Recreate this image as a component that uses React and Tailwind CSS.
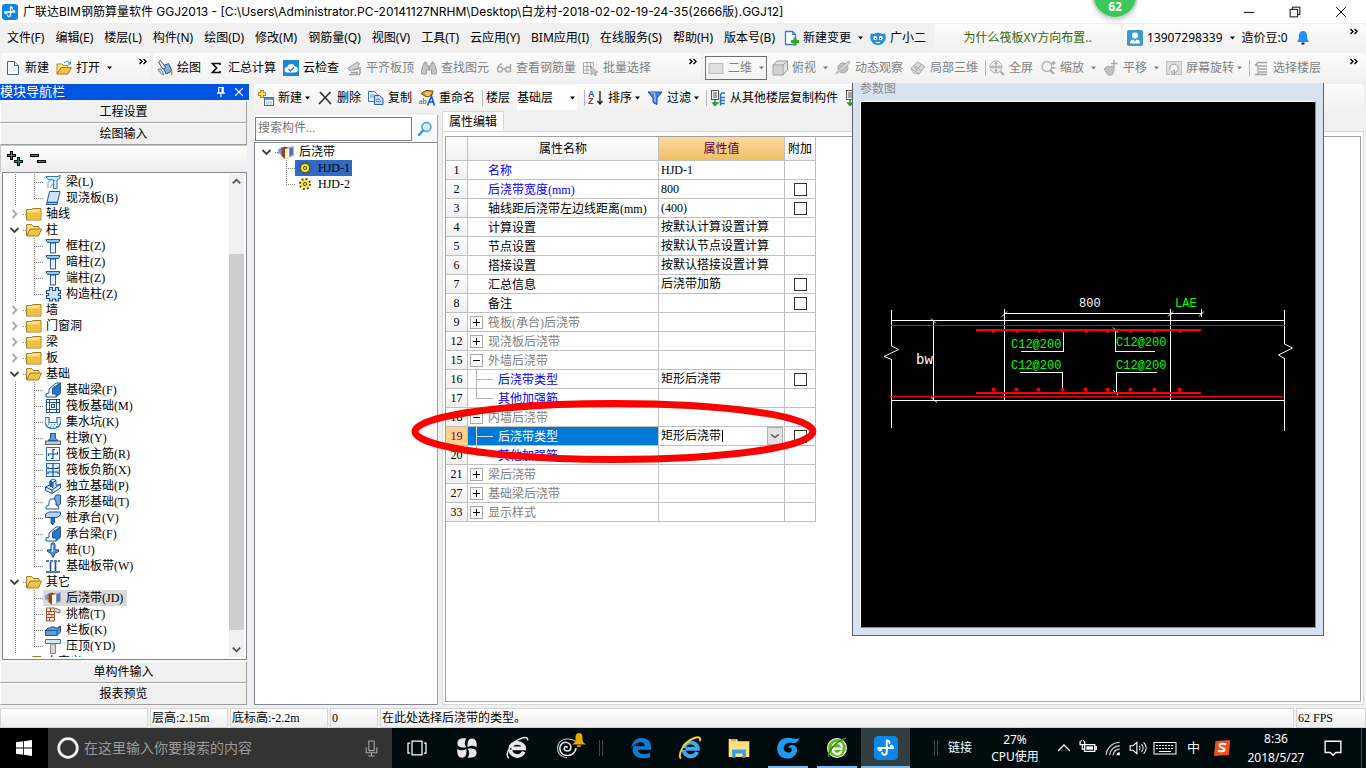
import React from 'react';
import clsx from 'clsx';

const UI_FONT = "font-['Noto_Sans','Noto_Sans_CJK_SC',sans-serif]";
const TITLE_FONT = "font-['Inter','Noto_Sans_CJK_SC',sans-serif]";
const SONG_FONT = "font-['Liberation_Serif','Noto_Sans_CJK_SC',serif]";

// ===== ICONS =====

const Ico = ({ children, className = 'h-4 w-4' }) => (
    <svg className={clsx('shrink-0', className)} viewBox="0 0 16 16" fill="none" aria-hidden="true">
        {children}
    </svg>
);

const LogoMark = ({ className }) => (
    <Ico className={className}>
        <rect width="16" height="16" rx="3" fill="#0b86ea" />
        <path d="M8.500 3v7.500c0 2.600-3 2.600-3 .6M2.800 8h10M2.800 8c0 1.800 1.600 2 2 1M8.500 3c1.500 0 2 .8 1.800 1.800M12.800 8c0-1.200-.8-1.600-1.600-1.400" stroke="#fff" strokeWidth="1.300" strokeLinecap="round" />
    </Ico>
);

const icons = {
    doc: (
        <Ico>
            <path d="M2.500 1.500h7l4 4v9h-11z" fill="#f6fbff" stroke="#41678f" />
            <path d="M9.500 1.500v4h4" fill="#cfe2f7" stroke="#41678f" />
        </Ico>
    ),
    open: (
        <Ico>
            <path d="M1 14V4h5l1.500 1.500H12V8H5z" fill="#ffe9a0" stroke="#b98a1e" />
            <path d="M1 14l4-6.500h10.500L12 14z" fill="#f6c445" stroke="#b07d14" />
            <path d="M8 3c2-2.500 5-2 5.500.5M14.500 1.500v2.500h-2.500" stroke="#3a7bd5" />
        </Ico>
    ),
    draw: (
        <Ico>
            <path d="M5.500 6l6-2.500 3.500 7.500-6 3z" fill="#7db4e8" stroke="#1f4f8f" />
            <path d="M1.500 2l2-1.500 5 6.500-1.500 2-2-1z" fill="#e9eef5" stroke="#3c4d66" />
            <path d="M1 9c1 3 3 5 6 6l-3-6z" fill="#b9d4ee" stroke="#4a6d97" strokeWidth=".8" />
            <path d="M12 10c2 0 3.500 2 2.500 5" stroke="#c28b1c" strokeWidth="1.500" />
        </Ico>
    ),
    sigma: (
        <Ico>
            <path d="M12 5V3.500H4.500L8.500 8l-4 4.500H12V11" stroke="#111" strokeWidth="1.700" />
        </Ico>
    ),
    cloud: (
        <Ico>
            <rect width="16" height="16" fill="#1b87cf" />
            <path d="M4.500 12.500a2.800 2.800 0 01-.3-5.600 4 4 0 017.600-.5 3 3 0 01.2 6z" fill="#fff" />
            <path d="M5.500 9l2 2 3.500-4" stroke="#1b87cf" strokeWidth="1.300" />
        </Ico>
    ),
    slab: (
        <Ico>
            <path d="M1.500 8.500l10-6.500 2 1.500-2 5-7.500 2z" fill="#d2d2d2" stroke="#9c9c9c" />
            <path d="M3 14.500h11M5 12.500h7M7 10l7-2v6" stroke="#a0a0a0" strokeWidth="1.500" />
        </Ico>
    ),
    binoculars: (
        <Ico>
            <path d="M3 3h3v3h4V3h3l2.500 7v4h-5v-4h-5v4h-5v-4z" fill="#c4c4c4" stroke="#a2a2a2" />
            <path d="M4.500 3V1.500M11.500 3V1.500M8 6v4" stroke="#9c9c9c" strokeWidth="1.500" />
        </Ico>
    ),
    glasses: (
        <Ico>
            <path d="M6 4C3 4 1.500 7 1.500 9.500a2.500 2.500 0 105 0 2.500 2.500 0 00-5 0M14.500 4v8M14.500 9.500a2.500 2.500 0 10-5 0 2.500 2.500 0 005 0M6.500 9h3" stroke="#a4a4a4" strokeWidth="1.300" />
        </Ico>
    ),
    batch: (
        <Ico>
            <path d="M.5 2.500h10v4M.5 2.500v11h6M.5 6.500h9M.5 10h6M4 2.500v11M7.500 2.500v6" stroke="#a8a8a8" />
            <path d="M8 7l7 5-3 .5 1.500 2.500-1.500.5-1.500-2.500L8 15z" fill="#c9c9c9" stroke="#9b9b9b" strokeWidth=".8" />
        </Ico>
    ),
    plane2d: (
        <Ico>
            <rect x="1" y="3.500" width="14" height="10" fill="#dedede" stroke="#bdbdbd" />
        </Ico>
    ),
    cube: (
        <Ico>
            <path d="M1 5l4-4h10.500v9L11 15H1z" fill="#e2e2e2" stroke="#9a9a9a" />
            <path d="M1 5h10v10M11 5l4.500-4" stroke="#9a9a9a" />
            <path d="M2 6h8v8H2z" fill="#d0d0d0" />
        </Ico>
    ),
    planet: (
        <Ico>
            <circle cx="8" cy="8" r="5" fill="#c2c2c2" stroke="#a8a8a8" />
            <path d="M4 12c-3 2.500-3.500 2-2.500.5C4 9 9.500 4 13 2c2.500-1.500 2.500-.5 1 1.500C12 6 8 9.500 4 12z" fill="#dcdcdc" stroke="#a0a0a0" strokeWidth=".8" />
        </Ico>
    ),
    local3d: (
        <Ico>
            <path d="M1 8.500L7.500 2l7.500 4.500L9 14z" fill="#d8d8d8" stroke="#a9a9a9" />
            <path d="M4 5.500l7.500 5M6 10.500L12 4M1 8.500L3.500 13 9 14M5 7l2 4" stroke="#a9a9a9" />
        </Ico>
    ),
    full: (
        <Ico>
            <circle cx="7" cy="7" r="6" fill="#efefef" stroke="#aaa" />
            <path d="M7 2.500v9M2.500 7h9M5.500 4L7 2.500 8.500 4M5.500 10L7 11.500 8.500 10M4 5.500L2.500 7 4 8.500M10 5.500L11.500 7 10 8.500" stroke="#999" />
            <path d="M11.500 11.500L15 15" stroke="#a5a5a5" strokeWidth="2" />
        </Ico>
    ),
    zoom: (
        <Ico>
            <circle cx="7" cy="6.500" r="5" fill="#f3f3f3" stroke="#b5b5b5" strokeWidth="1.500" />
            <path d="M10.500 10.500L14 14" stroke="#a5a5a5" strokeWidth="2" />
            <path d="M13.500 1v4M11.500 3h4M11.500 8h4" stroke="#a5a5a5" strokeWidth="1.300" />
        </Ico>
    ),
    pan: (
        <Ico>
            <path d="M3 7l2-1 2 1 2-1 2 1v4l-2 4H5L1 9z" fill="#c0c0c0" stroke="#a8a8a8" />
            <path d="M11 0v7M8 3.500h6.500" stroke="#a5a5a5" strokeWidth="1.300" />
        </Ico>
    ),
    rotate: (
        <Ico>
            <rect x=".5" y="1.500" width="15" height="13" fill="#dedede" stroke="#c2c2c2" />
            <path d="M4 9.500A4.200 4.200 0 118.500 12.500M8.500 10v4.500L5.500 12z" fill="#f4f4f4" stroke="#a0a0a0" />
        </Ico>
    ),
    floors: (
        <Ico>
            <path d="M2 5.500l3-3h9M6 6h8M6 9h8M6 12h8M2 14.500h12M2 5.500h3v9" stroke="#a5a5a5" strokeWidth="1.300" />
        </Ico>
    ),
    change: (
        <Ico>
            <path d="M2.500 1.500h7l3 3v10h-10z" fill="#fff" stroke="#2d7dd2" strokeWidth="1.300" />
            <path d="M9.500 1.500v3h3" stroke="#2d7dd2" />
            <path d="M12 7.500v8M8 11.500h8" stroke="#37a821" strokeWidth="3" />
        </Ico>
    ),
    robot: (
        <Ico>
            <path d="M1 3.500l3 .5a8 8 0 018 0l3-.5c1 2 1 5 0 7C13.500 13.500 11 15 8 15s-5.500-1.500-7-4.500c-1-2-1-5 0-7z" fill="#1f8fe0" />
            <ellipse cx="5.200" cy="8" rx="2" ry="2.300" fill="#fff" />
            <ellipse cx="10.800" cy="8" rx="2" ry="2.300" fill="#fff" />
            <path d="M5.500 8v1M10.500 8v1" stroke="#123" />
            <path d="M6 12.200c1.200.8 2.800.8 4 0" stroke="#fff" />
        </Ico>
    ),
    user: (
        <Ico>
            <rect width="16" height="16" rx="2" fill="#3f97cf" />
            <circle cx="8" cy="5.500" r="3" fill="#fff" />
            <path d="M3 13.500c0-4 2.500-4 5-4s5 0 5 4z" fill="#fff" />
            <path d="M6 9l2 2.500L10 9" fill="#3f97cf" />
        </Ico>
    ),
    bell: (
        <Ico>
            <path d="M8 1c-3.500 0-4 3-4 5.500S3 10 2 12h12c-1-2-2-3-2-5.500S11.500 1 8 1z" fill="#1e90ff" />
            <path d="M6.500 13.500h3" stroke="#222" strokeWidth="2" />
        </Ico>
    ),
    add: (
        <Ico>
            <path d="M4 0v8M0 4h8" stroke="#a07a00" strokeWidth="3.500" />
            <path d="M4 1v6M1 4h6" stroke="#ffe14d" strokeWidth="1.800" />
            <rect x="6.500" y="7.500" width="9" height="8" fill="#fff" stroke="#3a6ea5" />
            <path d="M7 9h8" stroke="#5b9be0" strokeWidth="2" />
            <path d="M8 12h6M8 14h6" stroke="#8bb3dd" />
        </Ico>
    ),
    del: (
        <Ico>
            <path d="M3 2l11 12M13.500 2L2 14" stroke="#333" strokeWidth="1.700" />
        </Ico>
    ),
    copy: (
        <Ico>
            <path d="M.5 1.500h6l3 3v7h-9z" fill="#e6f1ff" stroke="#3573c4" />
            <path d="M6.500 5.500h5l3.500 3v6H6.500z" fill="#bcd8fb" stroke="#2a62b0" />
            <path d="M2 5h4M2 7h4M8 9.500h4M8 11.500h5" stroke="#5f94d8" />
        </Ico>
    ),
    rename: (
        <Ico>
            <path d="M2 3.500l5-3 7 .5-1 4-5 2-3-1.500z" fill="#d79a2b" stroke="#705012" />
            <path d="M6 3h5M7 5h4" stroke="#fff0b8" />
            <text x="0" y="14" fontSize="8" fontFamily="Liberation Serif" fill="#444">ab</text>
            <path d="M8.500 15.500L12.500 6l3 9.500M10 12h4.500" stroke="#1556c9" strokeWidth="1.600" />
        </Ico>
    ),
    sort: (
        <Ico>
            <text x="0" y="7" fontSize="9" fontWeight="bold" fontFamily="Liberation Sans" fill="#2a4fa8">A</text>
            <text x="0" y="14" fontSize="9" fontWeight="bold" fontFamily="Liberation Sans" fill="#a03030">Z</text>
            <path d="M12 1v12M9.500 11l2.500 3 2.500-3" stroke="#222" strokeWidth="1.400" />
        </Ico>
    ),
    filter: (
        <Ico>
            <path d="M1 2h14L10 8v6.500l-4-2V8z" fill="#3d83e6" stroke="#1d4ea3" />
            <path d="M3.500 3h4L8 8v4" stroke="#a8cbff" strokeWidth="1.200" />
        </Ico>
    ),
    copyFloor: (
        <Ico>
            <rect x="1.500" y=".5" width="7" height="9" fill="#f3f3f3" stroke="#555" />
            <path d="M3 3h4M3 5h4M3 7h4" stroke="#555" />
            <path d="M5 10v3M3 13l2 2.500L7.500 13z" stroke="#1f9d2f" strokeWidth="1.600" />
            <path d="M15 3h-3l-1.500 1.500v11M11 7.500h4M11 10.500h4M11 13.500h4" stroke="#2a6bc9" strokeWidth="1.500" />
        </Ico>
    ),
    search: (
        <Ico>
            <circle cx="9.500" cy="6" r="4.500" fill="#dff0ff" stroke="#5aaeea" strokeWidth="1.800" />
            <path d="M6 9.500L2 14" stroke="#3f94d8" strokeWidth="2.500" strokeLinecap="round" />
        </Ico>
    ),
    // component types in the module tree
    beam: (
        <Ico>
            <path d="M1 2.500h12l2-1.500v3l-3 2v8.500H8.500V6L3 5.500z" fill="#d6ecfc" stroke="#2a78c2" />
            <path d="M3 14V8l4-3M5 14l5-8" stroke="#5aa5df" />
        </Ico>
    ),
    castSlab: (
        <Ico>
            <path d="M4.500 1.500h10.500L12 14.500H1.500z" fill="#cfe4fb" stroke="#2257a8" />
            <path d="M2 12.500h10.500" stroke="#2257a8" strokeWidth="1.500" />
        </Ico>
    ),
    column: (
        <Ico>
            <path d="M1 1.500h14l-1.500 3h-11z" fill="#9cc4f3" stroke="#1f5fae" />
            <path d="M5.500 5h5v10h-5z" fill="#e6f1ff" stroke="#1f5fae" />
        </Ico>
    ),
    gearCol: (
        <Ico>
            <path d="M4.500 1.500h3v3h3v-3h3v3h2v3h-2v2h2v3h-2v2.500h-3v-2h-3v2h-3v-2.500h-3v-3h2v-2h-2v-3h3z" fill="#cfe1f6" stroke="#1d4f94" strokeWidth="1.200" />
        </Ico>
    ),
    fBeam: (
        <Ico>
            <path d="M1 15v-3l3-1V7l7-6h4.500v10L11 15z" fill="#eef6ff" stroke="#1b559e" />
            <path d="M7.500 12V6l8-5v10L11 15v-3z" fill="#2c76bd" stroke="#1b559e" />
        </Ico>
    ),
    raft: (
        <Ico>
            <rect x="1.500" y="1.500" width="13" height="13" fill="#fff" stroke="#184f9b" />
            <path d="M4.500 1v14M11.500 1v14M1 4.500h14M1 11.500h14" stroke="#184f9b" />
            <rect x="6.500" y="6.500" width="3" height="3" stroke="#184f9b" />
        </Ico>
    ),
    pit: (
        <Ico>
            <path d="M0 3.500h4v5h8v-5h4v4c-1 5-4 7-8 7s-7-2-8-6z" fill="#e7f2fd" stroke="#2d6fb7" strokeWidth="1.200" />
            <path d="M3 10h1M6 11h1M9 10.500h1M12 10h1M5 13h1M8 13h1M11 12.500h1" stroke="#2d6fb7" />
        </Ico>
    ),
    pier: (
        <Ico>
            <rect x=".5" y="11" width="15" height="3.500" fill="#c9c9c9" stroke="#666" />
            <path d="M3 10.500l2.500-2V3.500h5v5l2.500 2z" fill="#5c9be0" stroke="#1f559e" />
        </Ico>
    ),
    mainBar: (
        <Ico>
            <rect x="1.500" y="1.500" width="13" height="13" fill="#f3f9ff" stroke="#2a69bd" />
            <path d="M10 3.500H8v9H6M3.500 10V8h9V6" stroke="#184f9b" strokeWidth="1.200" />
        </Ico>
    ),
    negBar: (
        <Ico>
            <rect x="1.500" y="1.500" width="13" height="13" fill="#dbeafb" stroke="#2a69bd" />
            <path d="M8 1v14M3 5v1.500h10V5M3 12v-2h10v2" stroke="#184f9b" strokeWidth="1.200" />
        </Ico>
    ),
    isolated: (
        <Ico>
            <path d="M.5 9L5 7V3l3-2 3 1.500v5L15.500 6v4L7 15.500l-6.500-3z" fill="#d9eafa" stroke="#184f9b" />
            <path d="M5 3l3 1.500v5L5 8zM8 4.500l3-2" fill="#2f73c0" stroke="#184f9b" />
            <path d="M.5 9L7 12l8.500-6M7 12v3" stroke="#184f9b" />
        </Ico>
    ),
    strip: (
        <Ico>
            <path d="M9 5l2-4h4.500v9L12 12z" fill="#6fa8de" stroke="#1b559e" />
            <path d="M1 15v-2.500L4 11V8l1.500-3h4L11 8v3l2.500 1.500V15z" fill="#fff" stroke="#1b559e" />
        </Ico>
    ),
    cap: (
        <Ico>
            <path d="M.5 4L4 2h11.500v3L12 7.500H.5z" fill="#b4d5f5" stroke="#1b559e" />
            <path d="M6 8h3.500v4.500L7.700 15 6 12.500z" fill="#2f73c0" stroke="#1b559e" />
        </Ico>
    ),
    pile: (
        <Ico>
            <path d="M8 .8a2 2 0 012 2v5h3.500v1.700L10 11.500 8 15.500l-2-4-3.500-2V7.800H6v-5a2 2 0 012-2z" fill="#4f8fcf" stroke="#1b4f94" />
            <path d="M7.500 3v7" stroke="#d4e8fb" strokeWidth="1.500" />
        </Ico>
    ),
    stripSlab: (
        <Ico>
            <path d="M1 3h14" stroke="#184f9b" strokeWidth="1.600" strokeDasharray="3 1" />
            <path d="M1 14h14M5.500 4v9M10.500 4v9" stroke="#184f9b" strokeWidth="1.600" />
        </Ico>
    ),
    pourBand: (
        <Ico>
            <path d="M0 6l4-3v8l-4-2zM9 4l6.500-1.500v9L9 14z" fill="#7a94c8" stroke="#a3b2cf" />
            <path d="M3.500 4L7 2.500 11 4v10l-4 1-3.500-3z" fill="#8b4a1c" />
            <path d="M7 5l4-1v10l-4 1z" fill="#fff0dc" />
            <path d="M12 4h3v7h-3z" fill="#4f72b8" />
        </Ico>
    ),
    eaves: (
        <Ico>
            <path d="M1.500 2h8v13h-8z" fill="#fdf0e8" stroke="#a74f22" />
            <path d="M1.500 5.500h8M1.500 8.500h8M1.500 11.500h8M5.500 2v3.500M4 5.500v3M7 8.500v3M4.500 12v3" stroke="#a74f22" />
            <path d="M9.500 2L15 4v3L9.500 5.500" fill="#e2e2e2" stroke="#777" />
        </Ico>
    ),
    railing: (
        <Ico>
            <path d="M.5 8.500L3 6h2l1-1h4v1h2l3.500-2v6L12 13.500H.5z" fill="#5a9fd8" stroke="#1c5591" />
            <path d="M.5 8.500H12v5M12 8.500L15.500 4" stroke="#1c5591" />
        </Ico>
    ),
    coping: (
        <Ico>
            <path d="M.5 1.500h15v4H.5z" fill="#d2e8fb" stroke="#2879c9" />
            <path d="M5.500 6h5v9.500h-5z" fill="#d6d6d6" stroke="#8a8a8a" />
        </Ico>
    ),
    folder: (
        <Ico>
            <path d="M.5 3.500h5l1.500-1h8v11.500H.5z" fill="#f7d26a" stroke="#a77f22" />
            <path d="M1 6.500h13.500v7H1z" fill="#f1bf44" />
            <path d="M1.500 5h12" stroke="#fff2bf" />
        </Ico>
    ),
    folderOpen: (
        <Ico>
            <path d="M.5 13.500v-11h5L7 4.500h6v3H4z" fill="#fbe08c" stroke="#a77f22" />
            <path d="M.8 14L4 7h11.500l-3 7z" fill="#f3c24a" stroke="#a77f22" />
        </Ico>
    ),
    gear: (
        <Ico>
            <circle cx="8" cy="8" r="5" stroke="#5b4b00" strokeWidth="2" strokeDasharray="2 1.900" />
            <circle cx="8" cy="8" r="4" fill="#ffe600" />
            <circle cx="8" cy="8" r="1.500" fill="#fff" stroke="#333" />
        </Ico>
    ),
};

const Caret = () => (
    <svg className="h-1 w-[5px] shrink-0" viewBox="0 0 5 4" aria-hidden="true">
        <path d="M0 .5h5L2.500 3.500z" fill="currentColor" />
    </svg>
);

const More = () => (
    <svg className="h-2 w-2 shrink-0" viewBox="0 0 8 8" fill="none" aria-hidden="true">
        <path d="M.5 1L3 3.500.5 6M4.500 1L7 3.500 4.500 6" stroke="#000" strokeWidth="1.400" />
    </svg>
);

// ===== TOOLBARS =====

const Tool = ({ icon, label, arrow, tight, disabled, className }) => (
    <button
        type="button"
        className={clsx('flex shrink-0 items-center whitespace-nowrap leading-4', disabled ? 'text-[#808080]' : 'text-black', className)}
    >
        {icon}
        <span className={clsx(icon && 'ml-1', arrow && (tight ? 'mr-[3px]' : 'mr-[7px]'))}>{label}</span>
        {arrow && <Caret />}
    </button>
);

const Sep = () => <span className="-mr-1 h-4 w-px shrink-0 bg-[#b8b8b8]" />;

const Strip = ({ children, className }) => (
    <div className={clsx('flex items-center rounded-sm bg-linear-to-b from-[#fcfcfc] to-[#f1f1f1]', className)}>{children}</div>
);

const MENUS = ['文件(F)', '编辑(E)', '楼层(L)', '构件(N)', '绘图(D)', '修改(M)', '钢筋量(Q)', '视图(V)', '工具(T)', '云应用(Y)', 'BIM应用(I)', '在线服务(S)', '帮助(H)', '版本号(B)'];

const TitleBar = () => (
    <header className="relative flex h-[23px] shrink-0 items-center bg-white pl-0.5">
        <LogoMark className="h-4 w-4" />
        <h1 className={clsx('ml-[5px] flex-1 truncate text-xs', TITLE_FONT)}>
            广联达BIM钢筋算量软件 GGJ2013 - [C:\Users\Administrator.PC-20141127NRHM\Desktop\白龙村-2018-02-02-19-24-35(2666版).GGJ12]
        </h1>
        <div className="flex pr-0.5">
            <button type="button" aria-label="最小化" className="flex w-[46px] justify-center">
                <Ico className="h-3 w-3"><path d="M1 8.500h14" stroke="#000" strokeWidth="1.300" /></Ico>
            </button>
            <button type="button" aria-label="还原" className="flex w-[46px] justify-center">
                <Ico className="h-3 w-3"><path d="M1.500 4.500h10v10h-10zM4.500 4V1.500h10v10H12" stroke="#000" strokeWidth="1.300" /></Ico>
            </button>
            <button type="button" aria-label="关闭" className="flex w-[46px] justify-center">
                <Ico className="h-3 w-3"><path d="M1.500 1.500l13 13M14.500 1.500l-13 13" stroke="#000" strokeWidth="1.300" /></Ico>
            </button>
        </div>
        {/* floating memory ball, half off the screen */}
        <div className="absolute right-[228px] -top-[27px] z-10 flex h-[46px] w-[46px] items-end justify-center rounded-full border-2 border-[#c9d6ca] bg-[#3fc65a] pb-1 text-xs font-bold text-white shadow-md">
            <span className="leading-3">62</span>
        </div>
    </header>
);

const MenuBar = () => (
    <nav className="flex h-[30px] shrink-0 items-center pl-[7px] text-xs">
        <div className="flex shrink-0 gap-[11px]">
            {MENUS.map((m) => (
                <button key={m} type="button" className="whitespace-nowrap leading-4">{m}</button>
            ))}
        </div>
        <div className="ml-2 flex shrink-0 gap-[7px]">
            <Tool icon={icons.change} label="新建变更" arrow />
            <Tool icon={icons.robot} label="广小二" />
        </div>
        <Strip className="ml-2 h-[28px] w-[187px] shrink-0 justify-center">
            <a href="#tip" className="whitespace-nowrap text-[#336600]">为什么筏板XY方向布置..</a>
        </Strip>
        <Strip className="ml-0.5 h-[28px] flex-1 gap-[7px] pl-1">
            <Tool icon={icons.user} label="13907298339" arrow />
            <Tool label="造价豆:0" />
            {icons.bell}
            <span className="mb-3 ml-auto pr-2"><More /></span>
        </Strip>
    </nav>
);

const MainToolbar = () => (
    <div className="flex h-[30px] shrink-0 gap-0.5 pl-px text-xs">
        <Strip className="w-[150px] shrink-0 gap-[7px] pl-1">
            <Tool icon={icons.doc} label="新建" />
            <Tool icon={icons.open} label="打开" arrow />
            <span className="mb-3 ml-auto pr-1"><More /></span>
        </Strip>
        <Strip className="w-[548px] shrink-0 gap-[7px] pl-1">
            <Tool icon={icons.draw} label="绘图" />
            <Tool icon={icons.sigma} label="汇总计算" />
            <Tool icon={icons.cloud} label="云检查" />
            <Tool disabled icon={icons.slab} label="平齐板顶" />
            <Tool disabled icon={icons.binoculars} label="查找图元" />
            <Tool disabled icon={icons.glasses} label="查看钢筋量" />
            <Tool disabled icon={icons.batch} label="批量选择" />
            <span className="mb-3 ml-auto pr-1"><More /></span>
        </Strip>
        <Strip className="min-w-0 flex-1 gap-[7px] overflow-hidden pl-0.5">
            <Tool disabled icon={icons.plane2d} label="二维" arrow className="-mr-0.5 h-6 w-[62px] border border-[#6e6e6e] pl-0.5" />
            <Tool disabled icon={icons.cube} label="俯视" arrow />
            <Tool disabled icon={icons.planet} label="动态观察" />
            <Tool disabled icon={icons.local3d} label="局部三维" />
            <Sep />
            <Tool disabled icon={icons.full} label="全屏" />
            <Tool disabled icon={icons.zoom} label="缩放" arrow />
            <Tool disabled icon={icons.pan} label="平移" arrow />
            <Tool disabled icon={icons.rotate} label="屏幕旋转" arrow tight />
            <Sep />
            <Tool disabled icon={icons.floors} label="选择楼层" />
            <span className="mb-3 ml-auto pr-2"><More /></span>
        </Strip>
    </div>
);

// ===== MODULE TREE =====

const TREE = [
    { icon: 'beam', label: '梁(L)' },
    { icon: 'castSlab', label: '现浇板(B)', last: true },
    { folder: 'closed', label: '轴线' },
    { folder: 'open', label: '柱' },
    { icon: 'column', label: '框柱(Z)' },
    { icon: 'column', label: '暗柱(Z)' },
    { icon: 'column', label: '端柱(Z)' },
    { icon: 'gearCol', label: '构造柱(Z)', last: true },
    { folder: 'closed', label: '墙' },
    { folder: 'closed', label: '门窗洞' },
    { folder: 'closed', label: '梁' },
    { folder: 'closed', label: '板' },
    { folder: 'open', label: '基础' },
    { icon: 'fBeam', label: '基础梁(F)' },
    { icon: 'raft', label: '筏板基础(M)' },
    { icon: 'pit', label: '集水坑(K)' },
    { icon: 'pier', label: '柱墩(Y)' },
    { icon: 'mainBar', label: '筏板主筋(R)' },
    { icon: 'negBar', label: '筏板负筋(X)' },
    { icon: 'isolated', label: '独立基础(P)' },
    { icon: 'strip', label: '条形基础(T)' },
    { icon: 'cap', label: '桩承台(V)' },
    { icon: 'fBeam', label: '承台梁(F)' },
    { icon: 'pile', label: '桩(U)' },
    { icon: 'stripSlab', label: '基础板带(W)', last: true },
    { folder: 'open', label: '其它' },
    { icon: 'pourBand', label: '后浇带(JD)', active: true },
    { icon: 'eaves', label: '挑檐(T)' },
    { icon: 'railing', label: '栏板(K)' },
    { icon: 'coping', label: '压顶(YD)', last: true },
    { folder: 'closed', label: '自定义' },
];

const Expander = ({ open }) => (
    <svg className="h-4 w-[23px] shrink-0" viewBox="0 0 23 16" fill="none" aria-hidden="true">
        {open ? (
            <path d="M7.500 6l4 4 4-4" stroke="#404040" strokeWidth="1.800" />
        ) : (
            <path d="M9.500 4l4 4-4 4" stroke="#a6a6a6" strokeWidth="1.800" />
        )}
        <path d="M20 8.500h3" stroke="#808080" strokeDasharray="1 1" />
    </svg>
);

const TreeRow = ({ row }) => {
    if (row.folder) {
        return (
            <li className="flex h-4 items-center">
                <Expander open={row.folder === 'open'} />
                {row.folder === 'open' ? icons.folderOpen : icons.folder}
                <span className="ml-1 whitespace-nowrap leading-4">{row.label}</span>
            </li>
        );
    }
    return (
        <li className="flex h-4 items-center">
            <svg className="h-4 w-10 shrink-0" viewBox="0 0 40 16" fill="none" aria-hidden="true">
                <path d={row.last ? 'M12.500 0v16M31.500 0v9M31 8.500h9' : 'M12.500 0v16M31.500 0v16M31 8.500h9'} stroke="#808080" strokeDasharray="1 1" />
            </svg>
            <span className={clsx('flex h-4 items-center gap-[5px] whitespace-nowrap pl-0.5 pr-1 leading-4', row.active && 'bg-[#d9d9d9]')}>
                {icons[row.icon]}
                {row.label}
            </span>
        </li>
    );
};

const PanelButton = ({ children }) => (
    <button type="button" className="h-[22px] shrink-0 border border-t-white border-r-[#a0a0a0] border-b-[#a0a0a0] border-l-white bg-[#f0f0f0] text-center leading-4">
        {children}
    </button>
);

const ScrollArrow = ({ d }) => (
    <Ico className="h-[15px] w-[15px]"><path d={d} stroke="#505050" strokeWidth="1.800" /></Ico>
);

const ModulePanel = () => (
    <aside className={clsx('flex w-[249px] shrink-0 flex-col pr-0.5 pt-px text-xs', SONG_FONT)}>
        <div className="-mr-0.5 mb-px flex h-4 shrink-0 items-center bg-[#0054e3] text-white">
            <h2 className="flex-1 text-[13px] leading-4">模块导航栏</h2>
            <button type="button" aria-label="固定" className="mr-1.5">
                <Ico className="h-3 w-3"><path d="M5 2h6v7H5zM9.500 2v7M2.500 9.500h11M8 10v5" stroke="#fff" strokeWidth="1.500" /></Ico>
            </button>
            <button type="button" aria-label="关闭面板" className="mr-1">
                <Ico className="h-3 w-3"><path d="M3 3l10 10M13 3L3 13" stroke="#fff" strokeWidth="1.500" /></Ico>
            </button>
        </div>
        <PanelButton>工程设置</PanelButton>
        <PanelButton>绘图输入</PanelButton>
        <div className="flex h-[27px] shrink-0 items-center gap-[7px] border-t border-l border-[#c8c8c8] bg-linear-to-b from-white to-[#ededed] pl-1.5">
            <button type="button" aria-label="全部展开">
                <Ico>
                    <path d="M4.500 0v9M0 4.500h9M11.500 6v9M7 10.500h9" stroke="#000" strokeWidth="3" />
                    <path d="M4.500 1v7M1 4.500h7M11.500 7v7M8 10.500h7" stroke="#0a9f93" strokeWidth="1" />
                </Ico>
            </button>
            <button type="button" aria-label="全部折叠">
                <Ico>
                    <path d="M0 4.500h9M7 10.500h9" stroke="#000" strokeWidth="3" />
                    <path d="M1 4.500h7M8 10.500h7" stroke="#0a9f93" strokeWidth="1" />
                </Ico>
            </button>
        </div>
        <div className="ml-0.5 flex min-h-0 flex-1 border border-[#828790] bg-white pt-px pr-0.5 pb-0.5">
            <ul className="min-w-0 flex-1 overflow-hidden">
                {TREE.map((row, i) => <TreeRow key={i} row={row} />)}
            </ul>
            <div className="flex w-[15px] shrink-0 flex-col bg-[#f0f0f0]">
                <ScrollArrow d="M4 10l4-4 4 4" />
                <div className="flex-[65]" />
                <div className="flex-[375] bg-[#cdcdcd]" />
                <div className="flex-[12]" />
                <ScrollArrow d="M4 6l4 4 4-4" />
            </div>
        </div>
        <div className="mt-px flex shrink-0 flex-col">
            <PanelButton>单构件输入</PanelButton>
            <PanelButton>报表预览</PanelButton>
        </div>
    </aside>
);

// ===== COMPONENT LIST =====

const ComponentToolbar = () => (
    <Strip className="mr-0.5 h-7 shrink-0 gap-[7px] overflow-hidden pl-1 text-xs">
        <Tool icon={icons.add} label="新建" arrow tight />
        <Tool icon={icons.del} label="删除" />
        <Tool icon={icons.copy} label="复制" />
        <Tool icon={icons.rename} label="重命名" />
        <Sep />
        <label htmlFor="floor" className="whitespace-nowrap">楼层</label>
        <div className="relative flex h-6 w-[60px] items-center bg-white">
            <select id="floor" className="w-full appearance-none">
                <option>基础层</option>
            </select>
            <span className="pointer-events-none absolute right-0.5"><Caret /></span>
        </div>
        <Sep />
        <Tool icon={icons.sort} label="排序" arrow tight />
        <Tool icon={icons.filter} label="过滤" arrow tight />
        <Sep />
        <Tool icon={icons.copyFloor} label="从其他楼层复制构件" />
        {icons.copyFloor}
    </Strip>
);

const ComponentPanel = () => (
    <section className={clsx('flex w-[184px] shrink-0 flex-col border-r border-[#a0a0a0] text-xs', SONG_FONT)}>
        <div className="flex h-[27px] shrink-0 items-center gap-0.5 bg-white px-px">
            <input
                type="text"
                aria-label="搜索构件"
                placeholder="搜索构件..."
                className="h-6 min-w-0 flex-1 border border-[#7a7a7a] bg-white px-0.5 placeholder:text-[#757575]"
            />
            <button type="button" aria-label="搜索" className="flex h-5 w-[22px] items-center justify-center bg-[#f5f9fd]">{icons.search}</button>
        </div>
        <ul className="flex-1 border border-r-0 border-[#828790] bg-white pt-px">
            <li className="flex h-4 items-center">
                <Expander open />
                {icons.pourBand}
                <span className="ml-[5px] leading-4">后浇带</span>
            </li>
            {['HJD-1', 'HJD-2'].map((name, i) => (
                <li key={name} className="flex h-4 items-center">
                    <svg className="h-4 w-10 shrink-0" viewBox="0 0 40 16" fill="none" aria-hidden="true">
                        <path d={i === 1 ? 'M31.500 0v9M31 8.500h9' : 'M31.500 0v16M31 8.500h9'} stroke="#808080" strokeDasharray="1 1" />
                    </svg>
                    <span className={clsx('flex h-4 items-center gap-[5px] px-0.5 leading-4', i === 0 && 'bg-[#316ac5]')}>
                        {icons.gear}
                        {name}
                    </span>
                </li>
            ))}
        </ul>
    </section>
);

// ===== PROPERTY TABLE =====

const ROWS = [
    { n: 1, name: '名称', value: 'HJD-1', blue: true },
    { n: 2, name: '后浇带宽度(mm)', value: '800', blue: true, box: true },
    { n: 3, name: '轴线距后浇带左边线距离(mm)', value: '(400)', box: true },
    { n: 4, name: '计算设置', value: '按默认计算设置计算' },
    { n: 5, name: '节点设置', value: '按默认节点设置计算' },
    { n: 6, name: '搭接设置', value: '按默认搭接设置计算' },
    { n: 7, name: '汇总信息', value: '后浇带加筋', box: true },
    { n: 8, name: '备注', box: true },
    { n: 9, name: '筏板(承台)后浇带', group: '+' },
    { n: 12, name: '现浇板后浇带', group: '+' },
    { n: 15, name: '外墙后浇带', group: '-' },
    { n: 16, name: '后浇带类型', value: '矩形后浇带', child: true, blue: true, box: true },
    { n: 17, name: '其他加强筋', child: true, last: true, blue: true },
    { n: 18, name: '内墙后浇带', group: '-' },
    { n: 19, name: '后浇带类型', value: '矩形后浇带', child: true, active: true, box: true },
    { n: 20, name: '其他加强筋', child: true, last: true, blue: true },
    { n: 21, name: '梁后浇带', group: '+' },
    { n: 27, name: '基础梁后浇带', group: '+' },
    { n: 33, name: '显示样式', group: '+' },
];

const NameCell = ({ row }) => {
    let lead = <span className="w-5 shrink-0" />;
    if (row.group) {
        lead = (
            <button type="button" aria-label={row.group === '+' ? '展开' : '收起'} className="ml-0.5 mr-[5px] shrink-0">
                <svg className="block h-[13px] w-[13px]" viewBox="0 0 13 13" fill="none">
                    <rect x=".5" y=".5" width="12" height="12" fill="#fff" stroke="#a8a8a8" />
                    <path d={row.group === '+' ? 'M3 6.500h7M6.500 3v7' : 'M3 6.500h7'} stroke="#000" />
                </svg>
            </button>
        );
    }
    if (row.child) {
        lead = (
            <svg className="h-[18px] w-[30px] shrink-0" viewBox="0 0 30 18" fill="none" aria-hidden="true">
                <path d={row.last ? 'M8.500 0v9.500H25' : 'M8.500 0v18M8 9.500h17'} stroke={row.active ? '#d8d8d8' : '#b0b0b0'} />
            </svg>
        );
    }
    return (
        <div
            className={clsx(
                'flex h-[18px] items-center whitespace-nowrap leading-4',
                row.blue && 'text-[#0000ff]',
                row.group && 'text-[#808080]',
                row.active && 'bg-[#0078d7] text-white'
            )}
        >
            {lead}
            <span className="pt-0.5">{row.name}</span>
        </div>
    );
};

const ValueCell = ({ row }) => {
    if (!row.active) return <span className="block h-[18px] pl-0.5 leading-[18px]">{row.value}</span>;
    return (
        <div className="flex h-[18px] items-center pl-0.5 pr-px">
            <input type="text" aria-label={row.name} defaultValue={row.value} className="w-[61px] leading-4 outline-none" />
            <span className="h-3 w-px bg-black" />
            <button type="button" aria-label="下拉" className="ml-auto flex h-[18px] w-4 items-center justify-center border border-[#adadad] bg-[#e1e1e1]">
                <Ico className="h-3 w-3"><path d="M3 6l5 4 5-4" stroke="#404040" strokeWidth="1.500" /></Ico>
            </button>
        </div>
    );
};

const PropertyTable = () => (
    <table className="w-[370px] table-fixed border-separate border-spacing-0 text-xs [&_td]:border-r [&_td]:border-b [&_td]:border-[#c0c0c0] [&_td]:p-0 [&_th]:border-r [&_th]:border-b [&_th]:border-[#c0c0c0] [&_th]:p-0 [&_th]:font-normal">
        <colgroup>
            <col className="w-[22px]" />
            <col className="w-[191px]" />
            <col className="w-[126px]" />
            <col className="w-[31px]" />
        </colgroup>
        <thead>
            <tr className="h-6 bg-linear-to-b from-white to-[#f0f0f0]">
                <th />
                <th scope="col">属性名称</th>
                <th scope="col" className="bg-linear-to-b from-[#fbd9a0] to-[#f0bf60] text-[#5a0050]">属性值</th>
                <th scope="col">附加</th>
            </tr>
        </thead>
        <tbody>
            {ROWS.map((row) => (
                <tr key={row.n} className="h-[19px]">
                    <th scope="row" className={clsx('leading-4', row.active ? 'bg-[#ffd28a] text-[#5a0050]' : 'bg-linear-to-b from-white to-[#f0f0f0]')}>{row.n}</th>
                    <td><NameCell row={row} /></td>
                    <td><ValueCell row={row} /></td>
                    <td>
                        {row.box && (
                            <input
                                type="checkbox"
                                aria-label={`附加 ${row.name}`}
                                className="mx-auto block h-[13px] w-[13px] appearance-none border border-[#333] bg-white"
                            />
                        )}
                    </td>
                </tr>
            ))}
        </tbody>
    </table>
);

const PropertyPanel = () => (
    <section className={clsx('-mt-1 flex min-w-0 flex-1 flex-col pr-0.5 text-xs', SONG_FONT)}>
        <div role="tablist" className="flex shrink-0">
            <button type="button" role="tab" aria-selected="true" className="-mb-px h-[21px] border border-b-0 border-[#d9d9d9] bg-white px-1.5 leading-4">
                属性编辑
            </button>
        </div>
        <div className="flex-1 border border-[#d9d9d9] bg-white px-0.5 pt-1 pb-0.5">
            <div className="relative h-full border border-[#a0a0a0]">
                <PropertyTable />
                {/* hand-drawn marker around row 19 */}
                <svg className="pointer-events-none absolute -left-9 top-[262px] h-[64px] w-[408px]" viewBox="0 0 408 64" fill="none" aria-hidden="true">
                    <ellipse cx="204" cy="32.500" rx="199" ry="28" stroke="#ff0000" strokeWidth="7" />
                </svg>
            </div>
        </div>
    </section>
);

// ===== PARAMETER DRAWING =====

const TOP_DOTS = [993, 1017, 1039, 1062, 1086, 1107, 1130, 1154, 1180];
const BOTTOM_DOTS = [993, 1016, 1038, 1062, 1085, 1107, 1130, 1154, 1179];

const SectionDrawing = () => (
    <svg className="min-h-0 w-full flex-1 bg-black" viewBox="861 102 454 525" preserveAspectRatio="xMinYMin meet" fill="none" fontFamily="Liberation Mono, monospace">
        <g stroke="#fff" shapeRendering="crispEdges">
            <path d="M891.500 310v36M891.500 359v69M1284.500 310v34M1284.500 358v73" />
            <path d="M891 320.500h394M891 400.500h394M1004.500 309v92M1170.500 309v92M933.500 320v81" />
            <path d="M1004 313.500h198M1201.500 309v8" />
            <path d="M1063.500 332v19.500H1021M1115.500 330v21.500H1155M1062.500 388v-15.500H1020M1116.500 392v-19.500H1157" />
        </g>
        <path d="M891.500 346l7 3.500-14.500 7 7.500 3M1284.500 344l8 4-14 7 6 3.500M1002 316.500l5-5M1168 316.500l5-5M1199 316.500l5-5M931 318.500l5 5M931 397.500l6 5M1113 327.500l5 5M1113 390l5 5" stroke="#fff" />
        <path d="M891 325.500h394M890 396.500h393" stroke="#f00" shapeRendering="crispEdges" />
        <path d="M976 330h225M976 393h225" stroke="#f00" strokeWidth="2" shapeRendering="crispEdges" />
        {TOP_DOTS.map((x) => <path key={x} d={`M${x - 2} 331h5l-2.500 2.500z`} fill="#f00" />)}
        {BOTTOM_DOTS.map((x) => <circle key={x} cx={x + 0.5} cy="389.500" r="2" fill="#f00" />)}
        <g fontSize="12">
            <text x="1079" y="307" fill="#fff">800</text>
            <g fill="#0f0">
                <text x="1175" y="307">LAE</text>
                <text x="1011" y="348">C12@200</text>
                <text x="1116" y="346">C12@200</text>
                <text x="1011" y="369">C12@200</text>
                <text x="1116" y="369">C12@200</text>
            </g>
            <text x="916" y="364" fontSize="14" fill="#fff">bw</text>
        </g>
    </svg>
);

const DrawingWindow = () => (
    <section className={clsx('absolute top-0 right-[42px] flex h-[553px] w-[472px] flex-col border border-t-0 border-[#5a5f66] bg-[#d7e3f0] px-[7px] pb-[7px] text-xs', UI_FONT)}>
        <h2 className="h-[18px] shrink-0 leading-3 text-[#8c8c8c]">参数图</h2>
        <div className="flex min-h-0 flex-1 border border-white border-r-[#8a8a8a] border-b-[#8a8a8a]">
            <SectionDrawing />
        </div>
    </section>
);

// ===== STATUS BAR =====

const StatusCell = ({ children, className }) => (
    <div className={clsx('flex items-center border border-[#d4d4d4] bg-linear-to-b from-white to-[#efefef] pl-px', className)}>{children}</div>
);

const StatusBar = () => (
    <footer className={clsx('flex h-5 shrink-0 gap-0.5 text-xs', SONG_FONT)}>
        <StatusCell className="w-[148px]" />
        <StatusCell className="w-[78px]">层高:2.15m</StatusCell>
        <StatusCell className="w-[98px]">底标高:-2.2m</StatusCell>
        <StatusCell className="w-[48px]">0</StatusCell>
        <StatusCell className="flex-1">在此处选择后浇带的类型。</StatusCell>
        <StatusCell className="w-[70px]">62 FPS</StatusCell>
    </footer>
);

// ===== TASKBAR =====

const TaskButton = ({ label, children, wide, running, active }) => (
    <button
        type="button"
        aria-label={label}
        className={clsx('flex h-10 shrink-0 flex-col items-center', wide ? 'w-[50px]' : 'w-[49px]', active && 'bg-[#333e41]')}
    >
        <span className="flex flex-1 items-center">{children}</span>
        {(running || active) && <span className={clsx('-mt-0.5 h-0.5 bg-[#76b9ed]', active ? 'w-full' : 'w-10')} />}
    </button>
);

const Handle = () => <span className="h-4 w-1 shrink-0 border-x border-[#3c484b]" />;

const Taskbar = () => (
    <div className={clsx('flex h-10 shrink-0 items-center overflow-hidden bg-[#000b0e] text-xs text-white', UI_FONT)}>
        <button type="button" aria-label="开始" className="flex h-10 w-12 shrink-0 items-center justify-center bg-black">
            <Ico><path d="M0 2.300L7 1.300V7.600H0zM7.800 1.200L16 0v7.600H7.800zM0 8.400h7v6.300l-7-1zM7.800 8.400H16V16l-8.200-1.200z" fill="#fff" /></Ico>
        </button>
        <div className="flex h-10 w-[344px] shrink-0 items-center bg-[#333] pl-2 pr-3">
            <Ico className="h-6 w-6"><circle cx="8" cy="8" r="6.200" stroke="#f2f2f2" strokeWidth="1.800" /></Ico>
            <input
                type="text"
                aria-label="搜索"
                placeholder="在这里输入你要搜索的内容"
                className="ml-1 min-w-0 flex-1 bg-transparent text-sm outline-none placeholder:text-[#9a9a9a]"
            />
            <Ico className="h-[17px] w-[17px]"><path d="M5.500 1h5v9h-5zM3 7v5h10V7M8 12v3M5 15h6" stroke="#a8a8a8" /></Ico>
        </div>
        <TaskButton wide label="任务视图">
            <Ico className="h-5 w-5"><path d="M4 2.500h8v11H4zM2.500 4H.8v8h1.700M13.500 4h1.700v8h-1.700" stroke="#fff" /></Ico>
        </TaskButton>
        <TaskButton wide label="搜狗">
            <Ico className="h-[22px] w-[22px]">
                <path d="M7.500 1C3 .5 1 2 1 4.500S3.500 8 7.500 7.500C6 5.500 6 3 7.500 1zM15 7.500c.5-4.500-1-6.500-3.500-6.500S8 3.500 8.500 7.500c2-1.500 4.500-1.500 6.500 0zM8.500 15c4.500.5 6.500-1 6.500-3.500S12.500 8 8.500 8.500c1.500 2 1.500 4.500 0 6.500zM1 8.500C.5 13 2 15 4.500 15S8 12.500 7.500 8.500c-2 1.500-4.500 1.500-6.500 0z" fill="#e8e8e8" />
            </Ico>
        </TaskButton>
        <TaskButton wide label="浏览器">
            <Ico className="h-6 w-6">
                <path d="M14 8.300H4.500M3.500 9a4.700 4.700 0 009 1.500M3.500 8a4.800 4.600 0 019.300 0" stroke="#e8e8e8" strokeWidth="2.500" />
                <path d="M2.500 14.800C-.5 12 4 4 11 1.500c3-1 4.500-.5 4 1.500" stroke="#e8e8e8" />
            </Ico>
        </TaskButton>
        <TaskButton wide label="消息">
            <span className="relative">
                <Ico className="h-[22px] w-[22px]">
                    <path d="M8 8c.5-1.500-2-1.500-2 .3 0 2.500 4.500 2.700 4.800-.5C11 4 6 2.500 3.800 5.500c-2.500 3.500 0 8 4.500 8 3.500 0 6-2.500 6.200-5.500" stroke="#eee" strokeWidth="1.100" />
                    <path d="M14 3C9 0 3 1.500 1.500 6c-1.500 5 2 9 6.500 9" stroke="#ccc" strokeWidth=".8" />
                </Ico>
                <span className="absolute -right-2 -top-1">
                    <Ico className="h-[14px] w-[14px]"><path d="M8 0C4 0 4 4 4 7s-1 4-4 6h16c-3-2-4-3-4-6s0-7-4-7zM6 14h4v2H6z" fill="#e8a800" /></Ico>
                </span>
            </span>
        </TaskButton>
        <span className="ml-[7px] mr-[13px] flex"><Handle /></span>
        <TaskButton label="Edge">
            <Ico className="h-[22px] w-[22px]">
                <path d="M1 8C1.500 3 5 .8 8.500.8c4.500 0 6.800 3 6.800 6.500v2H5.500c.3 2 2 3.200 4.500 3.200 1.700 0 3.300-.4 4.600-1.200V14.500c-1.500.8-3.200 1-5 1C5 15.500 2 13 2 9.500c0-2 1-4 3.500-5.300C4.500 5.300 4 5.800 3.800 6.800h6.800c0-2-.8-3-2.800-3C5 3.800 2.500 5.500 1 8z" fill="#0c7bd8" />
            </Ico>
        </TaskButton>
        <TaskButton label="Internet Explorer">
            <Ico className="h-6 w-6">
                <path d="M14.500 8.500H5M3.800 9.200a4.700 4.700 0 009 1.500M3.800 8a4.800 4.600 0 019.400 0" stroke="#3fa9ee" strokeWidth="2.700" />
                <path d="M2 15C-.5 12.500 4 4 10.500 1.500c3.500-1.300 5-.5 4 2" stroke="#f3d02f" strokeWidth="1.300" />
            </Ico>
        </TaskButton>
        <TaskButton label="文件资源管理器">
            <Ico className="h-[22px] w-[22px]">
                <path d="M.5 1.500h6l1 1.500h8v11.500H.5z" fill="#ffdf86" />
                <path d="M2 1.500h4v1.500H2z" fill="#f0a52e" />
                <path d="M3 15V9h10v6h-2.500v-3h-5v3z" fill="#35a3de" />
            </Ico>
        </TaskButton>
        <TaskButton label="广联达 G+" running>
            <Ico className="h-6 w-6">
                <path d="M15.500 1.500c-.5 3-3 3.500-5.500 3-3-.5-5 1.500-4.800 4 .3 3 4.800 3.500 5.300.8.200-1.300-1-1.800-2.500-1.500C8.500 6 11 5.500 12.500 6.500 16 9 13 15 8 15 4 15.300.8 12.500.8 8.500.8 4 4 1.200 8 1.200c3 0 4.500 1.500 7.500.3z" fill="#1b9cf2" />
            </Ico>
        </TaskButton>
        <TaskButton label="360浏览器" running>
            <Ico className="h-[22px] w-[22px]">
                <circle cx="8" cy="8" r="7.300" fill="#fff" />
                <circle cx="8" cy="8" r="6.500" fill="#5dbb1c" />
                <path d="M12 8.500H5.200a3 3 0 006 1.500M5 7.500a3.100 3.100 0 016.500 0" stroke="#fff" strokeWidth="1.800" />
                <path d="M2 14.500C1 11 6 4 14.500.8" stroke="#2f8a08" strokeWidth="1.200" />
            </Ico>
        </TaskButton>
        <TaskButton label="广联达BIM钢筋算量软件" active>
            <LogoMark className="h-6 w-6" />
        </TaskButton>
        <div className="ml-auto flex h-10 shrink-0 items-center">
            <Handle />
            <span className="ml-[10px] w-[43px] leading-4">链接</span>
            <div className="w-12 text-center leading-[17px]">
                <p>27%</p>
                <p className="whitespace-nowrap">CPU使用</p>
            </div>
            <div className="ml-[17px] flex items-center gap-[7px]">
                <Ico><path d="M2 11l6-6 6 6" stroke="#fff" strokeWidth="1.300" /></Ico>
                <Ico className="h-[18px] w-[18px]"><path d="M5 5h9v6H5zM14 7h1.500v2H14M1 2v3h4V2M2 1v1M4 1v1M3 5v4h2" stroke="#fff" strokeWidth="1.200" /><path d="M6.500 6.500h6v3h-6z" fill="#fff" /></Ico>
                <Ico className="h-[18px] w-[18px]"><path d="M2 14A12 12 0 0114 3M5 14.500a9 9 0 019-8.500M8 14.500a6 6 0 016-5.500" stroke="#bbb" strokeWidth="1.300" /><path d="M11 14.500a3 3 0 013-2.700v2.700z" fill="#fff" /></Ico>
                <Ico className="h-[18px] w-[18px]"><path d="M1 6h2.500L7 3v10L3.500 10H1zM9 6c1 1 1 3 0 4M11 4.500c2 2 2 5 0 7M13 3c3 3 3 7 0 10" stroke="#fff" /></Ico>
            </div>
            <svg className="ml-1.5 h-4 w-6" viewBox="0 0 24 16" fill="none" aria-hidden="true">
                <rect x="1" y="2.500" width="22" height="11.500" stroke="#fff" />
                <path d="M3 5.500h18M3 8.500h18" stroke="#fff" strokeDasharray="2 1" />
                <path d="M6 11.500h12" stroke="#fff" />
            </svg>
            <span className="ml-2.5 text-[13px]">中</span>
            <span className="ml-3.5">
                <Ico>
                    <path d="M1.500 1L16 0l-1 15L0 16z" fill="#f0501e" />
                    <path d="M12 4.500C9 3 5.500 3.500 5.500 5.700c0 2.300 5 1.500 5 3.800 0 2-4 2.500-6.500.8" stroke="#fff" strokeWidth="2" />
                </Ico>
            </span>
            <div className="ml-[14px] w-[64px] text-center leading-[19px]">
                <p>8:36</p>
                <p>2018/5/27</p>
            </div>
            <button type="button" aria-label="通知" className="ml-4">
                <Ico className="h-[18px] w-[18px]"><path d="M1 2h14v10h-4.500L8 14.500 5.500 12H1z" stroke="#fff" strokeWidth="1.200" /></Ico>
            </button>
            <span className="ml-[19px] mr-1 h-10 w-px bg-[#4a5052]" />
        </div>
    </div>
);

const App = () => (
    <div className={clsx('flex h-screen flex-col overflow-hidden bg-[#f0f0f0] text-black', UI_FONT)}>
        <TitleBar />
        <MenuBar />
        <MainToolbar />
        <main className="relative flex min-h-0 flex-1 gap-[5px] pb-[3px]">
            <ModulePanel />
            <div className="flex min-w-0 flex-1 flex-col pt-px">
                <ComponentToolbar />
                <div className="mt-[3px] flex min-h-0 flex-1 gap-1">
                    <ComponentPanel />
                    <PropertyPanel />
                </div>
            </div>
            <DrawingWindow />
        </main>
        <StatusBar />
        <Taskbar />
    </div>
);

export default App;
